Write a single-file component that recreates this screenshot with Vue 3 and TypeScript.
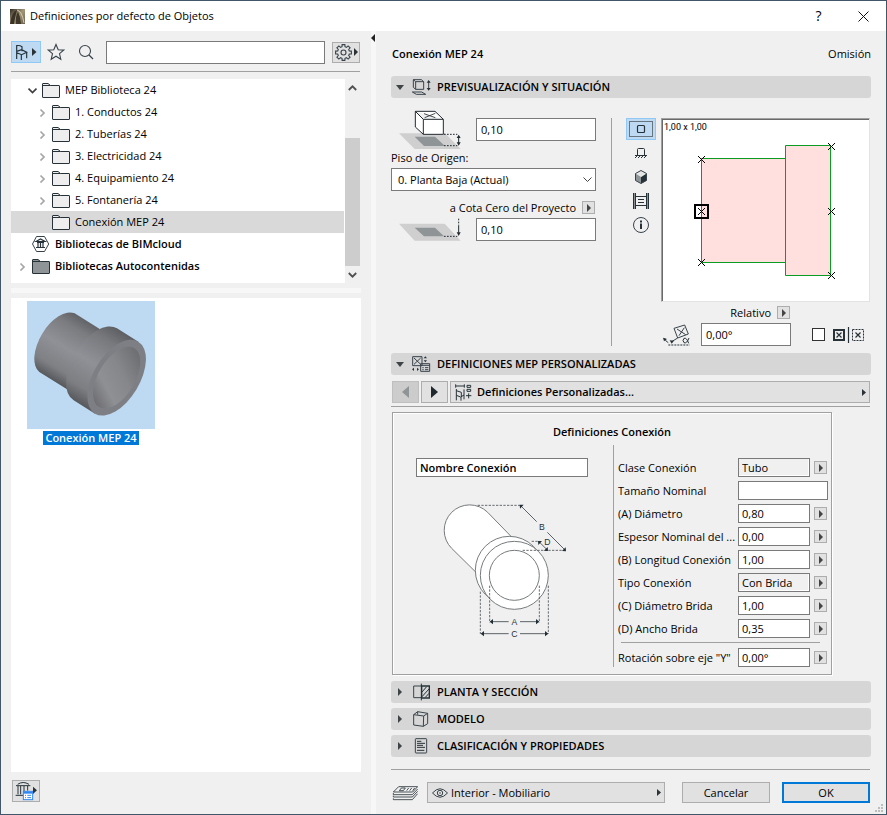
<script setup lang="ts">
import { ref } from 'vue'

interface TreeNode {
  label: string
  level: 'top' | 'child' | 'root'
  arrow: 'open' | 'closed' | 'none'
  icon: 'folder' | 'cloud' | 'filled'
}

interface Param {
  id: string
  label: string
  value: string
  kind: 'choice' | 'text' | 'wide'
}

const tree: TreeNode[] = [
  { label: 'MEP Biblioteca 24', level: 'top', arrow: 'open', icon: 'folder' },
  { label: '1. Conductos 24', level: 'child', arrow: 'closed', icon: 'folder' },
  { label: '2. Tuberías 24', level: 'child', arrow: 'closed', icon: 'folder' },
  { label: '3. Electricidad 24', level: 'child', arrow: 'closed', icon: 'folder' },
  { label: '4. Equipamiento 24', level: 'child', arrow: 'closed', icon: 'folder' },
  { label: '5. Fontanería 24', level: 'child', arrow: 'closed', icon: 'folder' },
  { label: 'Conexión MEP 24', level: 'child', arrow: 'none', icon: 'folder' },
  { label: 'Bibliotecas de BIMcloud', level: 'root', arrow: 'none', icon: 'cloud' },
  { label: 'Bibliotecas Autocontenidas', level: 'root', arrow: 'closed', icon: 'filled' },
]
const selected = ref(6)

const params = ref<Param[]>([
  { id: 'clase', label: 'Clase Conexión', value: 'Tubo', kind: 'choice' },
  { id: 'tamano', label: 'Tamaño Nominal', value: '', kind: 'wide' },
  { id: 'diametro', label: '(A) Diámetro', value: '0,80', kind: 'text' },
  { id: 'espesor', label: 'Espesor Nominal del ...', value: '0,00', kind: 'text' },
  { id: 'longitud', label: '(B) Longitud Conexión', value: '1,00', kind: 'text' },
  { id: 'tipo', label: 'Tipo Conexión', value: 'Con Brida', kind: 'choice' },
  { id: 'brida', label: '(C) Diámetro Brida', value: '1,00', kind: 'text' },
  { id: 'ancho', label: '(D) Ancho Brida', value: '0,35', kind: 'text' },
])

const search = ref('')
const height = ref('0,10')
const zeroHeight = ref('0,10')
const angle = ref('0,00°')
const rotation = ref('0,00°')
const connectionName = ref('Nombre Conexión')
const mirrored = ref(false)
const view = ref(0)
const hotspots = [[701, 159], [831, 146], [701, 211], [831, 211], [701, 262], [831, 275]]
</script>

<template>
  <div class="window">
    <header class="titlebar">
      <svg class="logo" width="15" height="15" viewBox="0 0 15 15" aria-hidden="true">
        <defs>
          <linearGradient id="logoBg" x1="0" y1="0" x2="1" y2="1">
            <stop offset="0" stop-color="#2f2a22" /><stop offset=".5" stop-color="#a39676" /><stop offset="1" stop-color="#6b604c" />
          </linearGradient>
        </defs>
        <rect width="15" height="15" fill="url(#logoBg)" />
        <path d="M0 15Q2 2 7 1Q5 8 4 15Z" fill="#3a3226" />
        <path d="M6 15Q5 7 8 3Q10 6 11 15Z" fill="#3f372a" />
        <path d="M7 1Q12 2 14 14" fill="none" stroke="#d3cab2" />
      </svg>
      <h1>Definiciones por defecto de Objetos</h1>
      <button class="caption help" aria-label="Ayuda">?</button>
      <button class="caption" aria-label="Cerrar">
        <svg width="11" height="11" viewBox="0 0 11 11"><path d="M.5 .5L10.5 10.5M10.5 .5L.5 10.5" fill="none" stroke="#111" /></svg>
      </button>
    </header>

    <div class="panes">
      <aside class="left">
        <div class="toolbar">
          <button class="chair" aria-label="Objetos">
            <svg width="13" height="17" viewBox="51 132 39 51"><path d="M56 177V137Q65 135 72 140V154M56 154L71 149L86 157L71 164L56 158M70 164V180M86 157V175" fill="none" stroke="#26323a" stroke-width="3.500" /></svg>
            <svg width="5" height="8" viewBox="0 0 5 8"><path d="M0 0L4.500 4L0 8Z" fill="#2b3339" /></svg>
          </button>
          <button class="bare" aria-label="Favoritos">
            <svg width="18" height="18" viewBox="0 0 18 18"><path d="M9 1.500L11.200 6.800L16.700 7.100L12.500 10.700L13.800 16.200L9 13.200L4.200 16.200L5.500 10.700L1.300 7.100L6.800 6.800Z" fill="none" stroke="#37434a" stroke-width="1.100" /></svg>
          </button>
          <button class="bare" aria-label="Buscar">
            <svg width="16" height="16" viewBox="0 0 16 16"><circle cx="7" cy="7" r="5.500" fill="none" stroke="#37434a" stroke-width="1.100" /><path d="M11 11L15 15" stroke="#37434a" stroke-width="1.300" /></svg>
          </button>
          <input v-model="search" class="search" aria-label="Texto de búsqueda">
          <button class="gear" aria-label="Ajustes">
            <svg width="17" height="17" viewBox="0 0 17 17"><g fill="none" stroke="#37434a" stroke-width="1.100"><path d="M7 2.700L7.100 .6H9.900L10 2.700L11.500 3.300L13.100 1.900L15.100 3.900L13.700 5.500L14.300 7L16.400 7.100V9.900L14.300 10L13.700 11.500L15.100 13.100L13.100 15.100L11.500 13.700L10 14.300L9.900 16.400H7.100L7 14.300L5.500 13.700L3.900 15.100L1.900 13.100L3.300 11.500L2.700 10L.6 9.900V7.100L2.700 7L3.300 5.500L1.900 3.900L3.900 1.900L5.500 3.300Z" /><circle cx="8.500" cy="8.500" r="2.500" /></g></svg>
            <svg width="4" height="8" viewBox="0 0 4 8"><path d="M0 0L4 4L0 8Z" fill="#2b3339" /></svg>
          </button>
        </div>

        <div class="tree-box">
          <ul class="tree" role="tree">
            <li
              v-for="(node, i) in tree"
              :key="node.label"
              role="treeitem"
              :aria-selected="selected === i"
              :class="['node', node.level, { selected: selected === i }]"
              @click="selected = i"
            >
              <svg class="twist" width="9" height="9" viewBox="0 0 9 9">
                <path v-if="node.arrow === 'open'" d="M.500 2.500L4.500 6.500L8.500 2.500" fill="none" stroke="#3f3f3f" stroke-width="1.700" />
                <path v-if="node.arrow === 'closed'" d="M2.500 1.500L6 5L2.500 8.500" fill="none" stroke="#a6a6a6" stroke-width="1.700" />
              </svg>
              <svg v-if="node.icon === 'cloud'" class="icon" width="18" height="16" viewBox="0 0 18 16">
                <path d="M4.500 .500H12.500L16.700 8L12.500 15.500H4.500L.500 8Z" fill="#fff" stroke="#37434a" />
                <path d="M4 5.500L8.500 3L13 5.500ZM5 6.500H12M6 6V11M8.500 6V11M11 6V11M4 11.500H13" fill="none" stroke="#263238" stroke-width="1.200" />
              </svg>
              <svg v-else class="icon" width="18" height="15" viewBox="0 0 18 15">
                <path d="M.500 1Q.500 .500 1 .500H6L8.500 2.500H17Q17.500 2.500 17.500 3V14Q17.500 14.500 17 14.500H1Q.500 14.500 .500 14Z" :fill="node.icon === 'filled' ? '#8f9497' : '#eeeeee'" stroke="#263238" />
                <path d="M.500 2.500H8.500" stroke="#263238" fill="none" />
              </svg>
              <span>{{ node.label }}</span>
            </li>
          </ul>
          <div class="scroll" aria-hidden="true">
            <svg width="9" height="6" viewBox="0 0 9 6"><path d="M.800 5L4.500 1.300L8.200 5" fill="none" stroke="#505050" stroke-width="1.800" /></svg>
            <i class="thumb"></i>
            <svg width="9" height="6" viewBox="0 0 9 6"><path d="M.800 1L4.500 4.700L8.200 1" fill="none" stroke="#505050" stroke-width="1.800" /></svg>
          </div>
        </div>
        <div class="hsplit"></div>

        <div class="items">
          <figure class="item">
            <svg width="128" height="128" viewBox="81 33 384 384" role="img" aria-label="Conexión">
              <defs>
                <linearGradient id="pipeA" gradientUnits="userSpaceOnUse" x1="224" y1="70" x2="118" y2="246">
                  <stop offset="0" stop-color="#626367" /><stop offset=".18" stop-color="#7b7c80" /><stop offset=".5" stop-color="#909196" /><stop offset=".82" stop-color="#7f8084" /><stop offset="1" stop-color="#58595c" />
                </linearGradient>
                <linearGradient id="pipeB" gradientUnits="userSpaceOnUse" x1="351" y1="115" x2="221" y2="331">
                  <stop offset="0" stop-color="#5e5f63" /><stop offset=".18" stop-color="#78797d" /><stop offset=".5" stop-color="#909196" /><stop offset=".82" stop-color="#7d7e82" /><stop offset="1" stop-color="#58595c" />
                </linearGradient>
                <linearGradient id="pipeC" gradientUnits="userSpaceOnUse" x1="403" y1="175" x2="297" y2="351">
                  <stop offset="0" stop-color="#6a6b6f" /><stop offset=".4" stop-color="#86878b" /><stop offset=".7" stop-color="#8f9094" /><stop offset="1" stop-color="#69696d" />
                </linearGradient>
              </defs>
              <rect x="81" y="33" width="384" height="384" fill="#bddaf2" />
              <path d="M224 70L360 155L254 331L118 246A56 103 31 0 1 224 70Z" fill="url(#pipeA)" />
              <path d="M351 115L415 155L285 371L221 331A69 126 31 0 1 351 115Z" fill="url(#pipeB)" />
              <ellipse cx="350" cy="263" rx="69" ry="126" transform="rotate(31 350 263)" fill="#7e7f84" />
              <ellipse cx="350" cy="263" rx="55" ry="103" transform="rotate(31 350 263)" fill="url(#pipeC)" />
            </svg>
            <figcaption>Conexión MEP 24</figcaption>
          </figure>
        </div>

        <button class="library" aria-label="Gestor de bibliotecas">
          <svg width="24" height="20" viewBox="39 63 72 60">
            <g fill="none" stroke="#263238" stroke-width="3">
              <path d="M45 77H88M50 73Q66 62 84 73M51 78V103M59 78V103M69 78V95M80 78V92M44 106H66" />
            </g>
            <rect x="67" y="94" width="28" height="25" fill="#fff" stroke="#2f86f0" stroke-width="3" />
            <path d="M67 98H95" stroke="#2f86f0" stroke-width="6" />
            <path d="M72 106H75M79 106H90M72 113H75M79 113H90" stroke="#2f86f0" stroke-width="3" />
            <path d="M96 80L108 91L96 102Z" fill="#2b3339" />
          </svg>
        </button>
      </aside>

      <div class="vsplit">
        <svg width="4" height="8" viewBox="0 0 4 8"><path d="M4 0L0 4L4 8Z" fill="#222" /></svg>
      </div>

      <main class="right">
        <div class="heading"><h2>Conexión MEP 24</h2><span>Omisión</span></div>

        <button class="section">
          <svg class="tri" width="8" height="5" viewBox="0 0 8 5"><path d="M0 0H8L4 5Z" fill="#3f4447" /></svg>
          <svg class="sicon" width="20" height="18" viewBox="96 144 60 54">
            <path d="M100 149H124L131 155V178H107L100 172ZM107 155H131M107 155V178M100 149L107 155M97 186H125L137 193H109ZM146 154V178" fill="none" stroke="#37434a" stroke-width="3" />
            <path d="M140 158L146 150L152 158ZM140 174L146 182L152 174Z" fill="#263238" />
          </svg>
          PREVISUALIZACIÓN Y SITUACIÓN
        </button>

        <section class="placement">
          <div class="levels">
            <div class="level">
              <svg width="62" height="40" viewBox="57 237 186 120">
                <path d="M57 307H195L242 354H104Z" fill="#cfcfcf" /><path d="M104 317H165L195 345H132Z" fill="#8f9497" />
                <path d="M106 241H165L190 265V310H130L106 288ZM106 241L130 265H190M130 265V310" fill="#fff" stroke="#222a30" stroke-width="3" />
                <path d="M132 248L166 260M166 247L134 260" stroke="#222a30" stroke-width="2.500" />
                <path d="M192 310H232M192 344H232" stroke="#222a30" stroke-width="3" stroke-dasharray="5 4" />
                <path d="M236 315V340" stroke="#222a30" stroke-width="3" /><path d="M230 321L236 311L242 321ZM230 334L236 344L242 334Z" fill="#222a30" />
              </svg>
              <input v-model="height" aria-label="Altura al piso de origen">
            </div>
            <label class="caption-row" for="story">Piso de Origen:</label>
            <div class="select">
              <select id="story"><option>0. Planta Baja (Actual)</option></select>
              <svg width="9" height="6" viewBox="0 0 9 6"><path d="M.500 .500L4.500 4.500L8.500 .500" fill="none" stroke="#444" /></svg>
            </div>
            <div class="caption-row end">
              <label for="zero">a Cota Cero del Proyecto</label>
              <button class="pop" aria-label="Elegir referencia"></button>
            </div>
            <div class="level">
              <svg width="62" height="24" viewBox="57 562 186 72">
                <path d="M57 579H194L242 630H104Z" fill="#cfcfcf" /><path d="M104 591H165L192 617H132Z" fill="#8f9497" />
                <path d="M192 617H232" stroke="#222a30" stroke-width="3" stroke-dasharray="5 4" />
                <path d="M236 564V584" stroke="#222a30" stroke-width="3" stroke-dasharray="5 4" /><path d="M236 584V606" stroke="#222a30" stroke-width="3" /><path d="M230 605L236 616L242 605Z" fill="#222a30" />
              </svg>
              <input id="zero" v-model="zeroHeight">
            </div>
          </div>
          <div class="divider"></div>
          <div class="views">
            <button :class="{ on: view === 0 }" aria-label="Símbolo 2D" @click="view = 0">
              <svg width="24" height="16" viewBox="0 0 24 16"><rect x=".500" y=".500" width="23" height="15" fill="none" stroke="#111" stroke-dasharray="1 1" /><rect x="8.500" y="4.500" width="7" height="7" rx="1" fill="none" stroke="#263238" stroke-width="1.200" /></svg>
            </button>
            <button :class="{ on: view === 1 }" aria-label="Alzado" @click="view = 1">
              <svg width="12" height="10" viewBox="0 0 12 10"><path d="M2.500 7V1.500Q2.500 .500 3.500 .500H8.500Q9.500 .500 9.500 1.500V7M0 7.500H12M0 10L2 8M3 10L5 8M6 10L8 8M9 10L11 8" fill="none" stroke="#263238" /></svg>
            </button>
            <button :class="{ on: view === 2 }" aria-label="Vista 3D" @click="view = 2">
              <svg width="12" height="14" viewBox="0 0 12 14"><path d="M6 .500L11.500 3.500V10.500L6 13.500L.500 10.500V3.500Z" fill="#8d9599" /><path d="M6 7L11.500 3.500V10.500L6 13.500Z" fill="#263238" /><path d="M6 .500L11.500 3.500L6 7L.500 3.500Z" fill="#e6e6e6" /><path d="M6 .500L11.500 3.500V10.500L6 13.500L.500 10.500V3.500Z" fill="none" stroke="#37434a" /></svg>
            </button>
            <button :class="{ on: view === 3 }" aria-label="Imagen" @click="view = 3">
              <svg width="16" height="16" viewBox="0 0 16 16"><path d="M1 .500V15.500M15 .500V15.500" stroke="#263238" stroke-width="2" stroke-dasharray="1 1" /><path d="M.500 0V16M15.500 0V16M2.500 0V16M13.500 0V16M3 3.500H13M3 12.500H13M5 6.500H11M5 9.500H11" fill="none" stroke="#263238" /></svg>
            </button>
            <button :class="{ on: view === 4 }" aria-label="Información" @click="view = 4">
              <svg width="16" height="16" viewBox="0 0 16 16"><circle cx="8" cy="8" r="7.500" fill="none" stroke="#37434a" /><path d="M8 6.500V12M8 3.500V5.500" stroke="#263238" stroke-width="2" /></svg>
            </button>
          </div>
          <div class="preview">
            <svg class="plan" viewBox="662 119 207 182" role="img" aria-label="Vista en planta">
              <path d="M701.500 158.500H785.500V262.500H701.500ZM785.500 145.500H830.500V275.500H785.500Z" fill="#ffe0df" stroke="#0a9b22" />
              <path v-for="([x, y], i) in hotspots" :key="i" :d="`M${x - 3} ${y - 3}l7 7M${x + 4} ${y - 3}l-7 7`" stroke="#000" fill="none" />
              <rect x="695" y="205" width="13" height="13" fill="none" stroke="#000" stroke-width="2" />
              <text x="664" y="130">1,00 x 1,00</text>
            </svg>
            <div class="relative">
              <label for="angle">Relativo</label>
              <button class="pop" aria-label="Modo de ángulo"></button>
            </div>
            <div class="angle">
              <svg width="27" height="22" viewBox="158 373 81 66">
                <path d="M191 386L223 376L234 403L202 415ZM200 388L226 405M222 384L206 408M202 415L184 426M174 429Q164 424 163 416" fill="none" stroke="#37434a" stroke-width="3" />
                <path d="M174 436H238" stroke="#263238" stroke-width="3" stroke-dasharray="6 3" />
                <path d="M158 414L170 418L161 425ZM178 422L191 423L184 432Z" fill="#263238" />
                <path d="M236 415Q229 433 221 429Q215 422 221 416Q229 413 235 431" fill="none" stroke="#263238" stroke-width="3" />
              </svg>
              <input id="angle" v-model="angle">
              <label class="mirror">
                <input v-model="mirrored" type="checkbox" aria-label="Reflejar">
                <svg width="32" height="18" viewBox="0 0 32 18">
                  <rect x="1" y="4" width="10" height="10" fill="none" stroke="#263238" stroke-width="2" /><path d="M3.500 6.500L8.500 11.500M8.500 6.500L3.500 11.500M15.500 1V17" stroke="#263238" fill="none" stroke-width="1.200" />
                  <rect x="19.500" y="3.500" width="11" height="11" fill="none" stroke="#263238" stroke-dasharray="2 1" /><path d="M22.500 6.500L27.500 11.500M27.500 6.500L22.500 11.500" stroke="#263238" stroke-width="1.200" />
                </svg>
              </label>
            </div>
          </div>
        </section>

        <button class="section">
          <svg class="tri" width="8" height="5" viewBox="0 0 8 5"><path d="M0 0H8L4 5Z" fill="#3f4447" /></svg>
          <svg class="sicon" width="20" height="18" viewBox="96 15 60 54">
            <path d="M98 20H126V47H98ZM102 24L122 43M122 24L102 43M122 41H149V64H122ZM122 46H149M127 53H131M135 53H145M127 59H131M135 59H145" fill="none" stroke="#37434a" stroke-width="3" />
            <path d="M131 25L136 19L141 25ZM131 31L136 37L141 31ZM102 53L96 58L102 63ZM111 53L117 58L111 63Z" fill="#263238" />
          </svg>
          DEFINICIONES MEP PERSONALIZADAS
        </button>

        <nav class="pages">
          <button class="step" disabled aria-label="Página anterior"><svg width="7" height="12" viewBox="0 0 7 12"><path d="M7 0L0 6L7 12Z" fill="#8f9497" /></svg></button>
          <button class="step" aria-label="Página siguiente"><svg width="7" height="12" viewBox="0 0 7 12"><path d="M0 0L7 6L0 12Z" fill="#1e282e" /></svg></button>
          <button class="page">
            <svg width="17" height="17" viewBox="225 99 51 51">
              <path d="M228 105H252M229 114V148M229 119L244 124V135M229 133L242 138L252 132M243 138V149M252 115V145M261 103H272V109H261ZM261 115H272V121H261ZM258 134H274M266 127V142M227 100V110M253 100V110" fill="none" stroke="#263238" stroke-width="3" />
            </svg>
            <span>Definiciones Personalizadas...</span>
            <svg width="4" height="7" viewBox="0 0 4 7"><path d="M0 0L4 3.500L0 7Z" fill="#2b3339" /></svg>
          </button>
        </nav>

        <section class="custom">
          <h3>Definiciones Conexión</h3>
          <div class="custom-body">
            <div class="drawing">
              <input v-model="connectionName" class="name" aria-label="Nombre de la conexión">
              <svg width="160" height="160" viewBox="0 0 480 480" role="img" aria-label="Cotas de la conexión">
                <g fill="#fff" stroke="#777b7d" stroke-width="3">
                  <path d="M242 138L173 67A76 76 0 1 0 65 175L136 245Z" />
                  <circle cx="238" cy="241" r="102" />
                  <circle cx="253" cy="256" r="102" /><circle cx="253" cy="256" r="75" />
                </g>
                <g fill="none" stroke="#4a5154" stroke-width="2.500" stroke-dasharray="7 4">
                  <path d="M143 46H270M278 181H402M305 154H328M179 287V398M328 287V398M151 305V432M355 287V432" />
                </g>
                <g fill="none" stroke="#5d6366" stroke-width="3">
                  <path d="M272 47L320 95M352 127L404 179M328 156L349 177M182 395H236M270 395H325M155 431H236M270 431H352" />
                </g>
                <path d="M269 44L281 44L270 56ZM408 184L396 183L407 172ZM324 153L336 153L325 165ZM354 183L342 182L353 171ZM179 395L189 387V403ZM328 395L318 387V403ZM152 431L162 423V439ZM355 431L345 423V439Z" fill="#1f2d35" />
                <g class="dims"><text x="336" y="120">B</text><text x="352" y="165">D</text><text x="253" y="404">A</text><text x="253" y="440">C</text></g>
              </svg>
            </div>
            <div class="params">
              <div v-for="p in params" :key="p.id" class="param">
                <label :for="p.id">{{ p.label }}</label>
                <select v-if="p.kind === 'choice'" :id="p.id" v-model="p.value"><option>{{ p.value }}</option></select>
                <input v-else :id="p.id" v-model="p.value" :class="{ wide: p.kind === 'wide' }">
                <button v-if="p.kind !== 'wide'" class="pop" :aria-label="`Opciones de ${p.label}`"></button>
              </div>
              <hr>
              <div class="param">
                <label for="rot">Rotación sobre eje "Y"</label>
                <input id="rot" v-model="rotation">
                <button class="pop" aria-label="Opciones de rotación"></button>
              </div>
            </div>
          </div>
        </section>

        <div class="closed">
          <button class="section">
            <svg class="tri" width="8" height="8" viewBox="0 0 8 8"><path d="M2 0L6 4L2 8Z" fill="#3f4447" /></svg>
            <svg class="sicon" width="20" height="18" viewBox="96 39 60 54">
              <path d="M124 48H101V83H124" fill="none" stroke="#37434a" stroke-width="3" /><path d="M125 48H148V84H125Z" fill="none" stroke="#263238" stroke-width="4" />
              <path d="M124 41V91M126 66L140 50M126 80L147 57M136 82L147 70" fill="none" stroke="#263238" stroke-width="3" />
            </svg>
            PLANTA Y SECCIÓN
          </button>
          <button class="section">
            <svg class="tri" width="8" height="8" viewBox="0 0 8 8"><path d="M2 0L6 4L2 8Z" fill="#3f4447" /></svg>
            <svg class="sicon" width="20" height="18" viewBox="96 120 60 54">
              <path d="M101 134L113 125L143 130V161L130 169L101 165ZM101 134L131 138L143 130M131 138L130 169M113 125V134" fill="none" stroke="#37434a" stroke-width="3" />
            </svg>
            MODELO
          </button>
          <button class="section">
            <svg class="tri" width="8" height="8" viewBox="0 0 8 8"><path d="M2 0L6 4L2 8Z" fill="#3f4447" /></svg>
            <svg class="sicon" width="20" height="18" viewBox="96 201 60 54">
              <rect x="106" y="206" width="34" height="43" rx="2" fill="none" stroke="#37434a" stroke-width="3" /><path d="M111 214H124M111 220H135M111 226H129M111 232H135M111 241H133" stroke="#263238" stroke-width="3" />
            </svg>
            CLASIFICACIÓN Y PROPIEDADES
          </button>
        </div>

        <footer class="footer">
          <svg width="26" height="16" viewBox="36 342 78 48">
            <path d="M40 363L56 347H113L98 363ZM40 366V371H97L113 354M40 374V378H97L113 361M40 382V386H97L113 368M64 351H76L70 359H58ZM86 351L80 359M95 351L89 359M104 351L98 359" fill="none" stroke="#263238" stroke-width="2.500" />
          </svg>
          <button class="layer">
            <svg width="16" height="10" viewBox="0 0 16 10"><path d="M.500 5Q8 -3.500 15.500 5Q8 13.500 .500 5Z" fill="none" stroke="#37434a" /><circle cx="8" cy="5" r="2.700" fill="none" stroke="#37434a" /><circle cx="8" cy="5" r=".800" fill="#37434a" /></svg>
            <span>Interior - Mobiliario</span>
            <svg width="4" height="7" viewBox="0 0 4 7"><path d="M0 0L4 3.500L0 7Z" fill="#2b3339" /></svg>
          </button>
          <button class="action">Cancelar</button>
          <button class="action primary">OK</button>
          <svg class="grip" width="8" height="8" viewBox="0 0 8 8" aria-hidden="true"><path d="M6 0h2v2h-2zM3 3h2v2h-2zM6 3h2v2h-2zM0 6h2v2h-2zM3 6h2v2h-2zM6 6h2v2h-2z" fill="#bdbdbd" /></svg>
        </footer>
      </main>
    </div>
  </div>
</template>

<style>
body { margin: 0; }
</style>

<style scoped>
* { box-sizing: border-box; }
.window {
  display: flex; flex-direction: column; min-height: 100vh;
  border: 1px solid #42566a; background: #f0f0f0; color: #000;
  font: 11px/16px "Open Sans", "Noto Sans", sans-serif;
}
svg { display: block; flex: none; }
button, input, select { font: inherit; color: inherit; margin: 0; padding: 0; border-radius: 0; }
button { display: flex; align-items: center; justify-content: center; border: 1px solid #adadad; background: #e1e1e1; }
h1, h2, h3 { margin: 0; font: inherit; }
input, select { min-width: 0; border: 1px solid #7a7a7a; background: #fff; padding: 0 4px; outline: none; appearance: none; }

.titlebar { display: flex; align-items: center; height: 30px; background: #fff; padding-left: 9px; }
.titlebar h1 { flex: 1; margin-left: 5px; }
.caption { width: 45px; height: 30px; border: 0; background: none; }
.help { font-size: 14px; }

.panes { flex: 1; display: grid; grid-template-columns: 370px 5px minmax(0, 1fr); }
.left { display: flex; flex-direction: column; padding: 10px 10px 12px; }
.toolbar { display: flex; align-items: center; height: 31px; padding-bottom: 8px; margin-right: 1px; border-bottom: 1px solid #a0a0a0; }
.chair { width: 30px; height: 22px; gap: 4px; background: #bddaf2; border-color: #90c8f6; }
.bare { width: 30px; height: 22px; border: 0; background: none; }
.search { flex: 1; height: 23px; margin: 0 7px 0 5px; }
.gear { width: 28px; height: 21px; gap: 2px; }

.tree-box { display: flex; height: 204px; margin: 7px 1px 0 0; }
.tree { flex: 1; margin: 0; padding: 0; list-style: none; background: #fff; }
.node { display: flex; align-items: center; height: 22px; padding-left: 17px; margin-right: 1px; }
.node.child { padding-left: 27px; }
.node.root { padding-left: 7px; font-weight: 600; }
.node.selected { background: #d9d9d9; }
.twist, .icon { margin-right: 5px; }
.scroll { width: 15px; display: flex; flex-direction: column; align-items: center; padding: 6px 0 5px; background: #f0f0f0; }
.thumb { width: 100%; height: 128px; margin: auto 0 6px; background: #cdcdcd; }
.hsplit { height: 5px; margin: 5px 0; background: #f7f7f7; }
.items { flex: 1; background: #fff; padding: 3px 16px; }
.item { margin: 0; width: 128px; display: flex; flex-direction: column; align-items: center; }
.item figcaption { margin-top: 2px; padding: 0 2px; line-height: 14px; color: #fff; background: #0078d7; font-weight: 600; white-space: nowrap; }
.library { width: 28px; height: 22px; margin: 8px 0 0 1px; }

.vsplit { background: #f7f7f7; padding-top: 3px; }

.right { display: flex; flex-direction: column; min-width: 0; padding: 15px 15px 11px; }
.heading { display: flex; justify-content: space-between; height: 30px; }
.heading h2 { margin-left: 1px; font-weight: 600; }
.section { width: 100%; height: 22px; justify-content: flex-start; border: 0; border-radius: 3px; background: #d6d6d6; padding: 0 5px; font-weight: 600; text-align: left; }
.tri { margin-right: 8px; }
.sicon { margin-right: 5px; }

.pop { width: 13px; height: 13px; flex: none; }
.pop::before { content: ""; border: 4px solid transparent; border-left-color: #444; border-right-width: 0; }

.placement { display: grid; grid-template-columns: 206px 1px 30px minmax(0, 1fr); column-gap: 14px; padding: 20px 1px 7px 0; }
.levels { padding-right: 1px; }
.level { display: flex; align-items: center; height: 23px; padding-left: 8px; }
.level input { width: 120px; height: 23px; margin-left: auto; }
.caption-row { display: flex; align-items: center; height: 27px; padding-top: 6px; }
.caption-row.end { justify-content: flex-end; gap: 6px; padding: 6px 1px 0 0; }
.select { display: grid; align-items: center; }
.select > * { grid-area: 1 / 1; }
.select select { width: 100%; height: 23px; padding-left: 6px; }
.select svg { justify-self: end; margin-right: 4px; pointer-events: none; }
.divider { background: #a0a0a0; }
.views { display: flex; flex-direction: column; gap: 2px; }
.views button { width: 30px; height: 22px; border: 0; background: none; }
.views .on { border: 1px solid #90c8f6; background: #bddaf2; }
.preview { margin-left: -9px; }
.plan { width: 100%; height: 184px; background: #fff; border: 1px solid; border-color: #a0a0a0 #e3e3e3 #e3e3e3 #a0a0a0; box-shadow: inset 1px 1px #696969; }
.plan text { font: 9px "Roboto", sans-serif; }
.relative { display: flex; align-items: center; justify-content: flex-end; width: 129px; height: 21px; gap: 6px; }
.angle { display: flex; align-items: center; height: 23px; }
.angle > svg { margin-left: 2px; }
.angle > input { width: 90px; height: 23px; margin-left: 11px; }
.mirror { display: flex; align-items: center; margin: 0 5px 0 auto; gap: 8px; }
.mirror input { width: 13px; height: 13px; border-color: #333; padding: 0; }
.mirror input:checked { background: #263238; }

.pages { display: flex; gap: 2px; padding: 6px 0 3px 1px; border-bottom: 1px solid #a0a0a0; margin-right: 1px; }
.step { width: 27px; height: 22px; }
.step:disabled { background: #ccc; border-color: #bfbfbf; }
.page { flex: 1; height: 22px; padding: 0 3px 0 4px; gap: 5px; font-weight: 600; }
.page span { flex: 1; text-align: left; }

.custom { width: 440px; max-width: 100%; height: 263px; margin: 5px 0 6px 1px; border: 1px solid #a0a0a0; box-shadow: inset 1px 1px #fff, 1px 1px #fff; }
.custom h3 { padding-top: 11px; height: 32px; text-align: center; font-weight: 600; }
.custom-body { display: grid; grid-template-columns: 221px minmax(0, 1fr); height: 220px; }
.drawing { padding: 13px 25px 0 23px; border-right: 1px solid #a0a0a0; }
.name { width: 172px; height: 19px; font-weight: 600; padding: 0 3px; }
.drawing svg { margin: 13px 0 0 14px; }
.dims { font: 400 26px "Liberation Sans", sans-serif; fill: #263238; text-anchor: middle; }
.params { display: flex; flex-direction: column; gap: 4px; padding: 13px 3px 0 4px; }
.param { display: flex; align-items: center; height: 19px; }
.param label { flex: 1; min-width: 0; white-space: nowrap; }
.param input, .param select { width: 72px; height: 19px; margin-right: 4px; padding: 0 3px; }
.param select { background: #f0f0f0; box-shadow: inset -1px -1px #fff; }
.param .wide { width: 90px; margin-right: 0; }
.param .pop { margin-right: 1px; }
hr { width: 199px; height: 1px; margin: 0 0 1px 3px; border: 0; background: #a0a0a0; }

.closed { display: flex; flex-direction: column; gap: 5px; }
.footer { position: relative; display: flex; align-items: center; margin: auto 1px 0 0; padding-top: 12px; border-top: 1px solid #a0a0a0; }
.footer > svg:first-child { margin-left: 1px; }
.layer { flex: 1; height: 21px; margin: 0 17px 0 9px; padding: 0 3px 0 4px; gap: 3px; }
.layer span { flex: 1; text-align: left; }
.action { width: 88px; height: 21px; }
.primary { margin-left: 12px; border: 2px solid #0078d7; }
.grip { position: absolute; right: -13px; bottom: -9px; }
</style>
